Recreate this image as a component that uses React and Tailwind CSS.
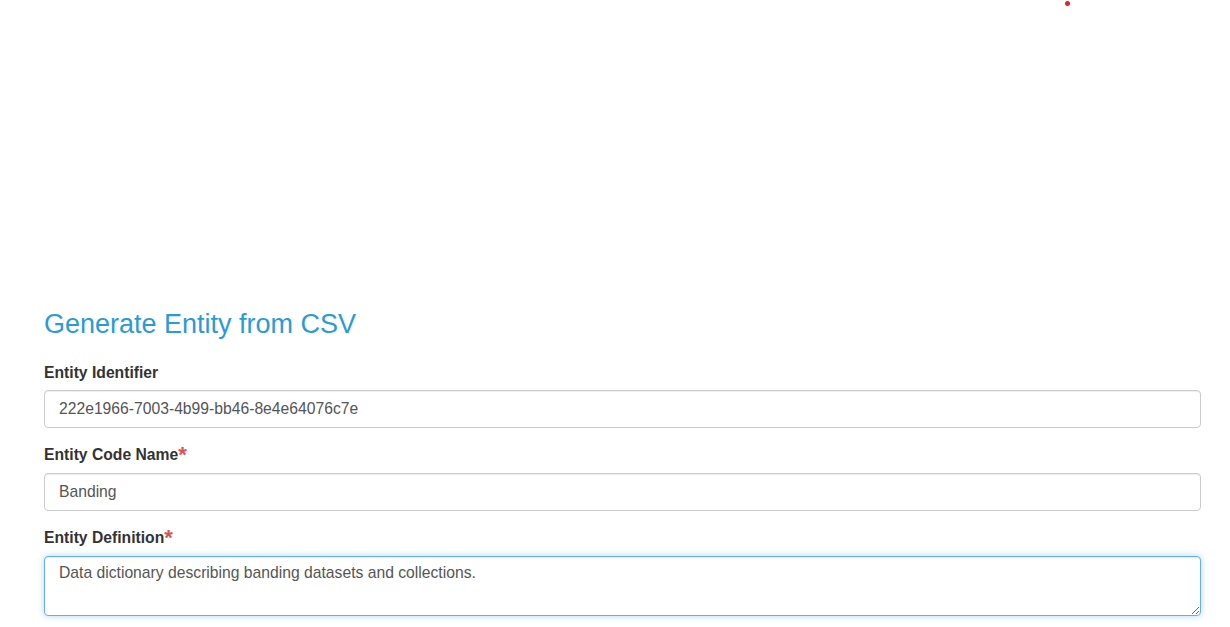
import React from 'react';

function Field({ label, required, children }) {
  return (
    <div className="mb-[16px]">
      <label className="block mb-[7px] text-[15.7px] leading-[20px] font-bold text-[#333]">
        {label}
        {required && <span className="text-[#d9534f] text-[22px] font-bold leading-none align-[-2px]">*</span>}
      </label>
      {children}
    </div>
  );
}

export default function App() {
  return (
    <div className="relative min-h-[627px] bg-white font-['Liberation_Sans',Arial,sans-serif]">
      {/* stray marker at top */}
      <div className="absolute left-[1065px] top-[1px] w-[5px] h-[5px] rounded-full bg-[#e0252b]" />

      <div className="pt-[306px] pl-[44px] pr-[29px]">
        <h3 className="text-[27px] leading-[36px] text-[#2b9bd5] mb-[21px]">Generate Entity from CSV</h3>

        <Field label="Entity Identifier">
          <input
            readOnly
            value="222e1966-7003-4b99-bb46-8e4e64076c7e"
            className="block w-full h-[38px] px-[14px] border border-[#ccc] rounded-[4px] text-[15.7px] text-[#555] shadow-[inset_0_1px_1px_rgba(0,0,0,0.075)] outline-none"
          />
        </Field>

        <Field label="Entity Code Name" required>
          <input
            readOnly
            value="Banding"
            className="block w-full h-[38px] px-[14px] border border-[#ccc] rounded-[4px] text-[15.7px] text-[#555] shadow-[inset_0_1px_1px_rgba(0,0,0,0.075)] outline-none"
          />
        </Field>

        <Field label="Entity Definition" required>
          <textarea
            readOnly
            value="Data dictionary describing banding datasets and collections."
            className="block w-full h-[60px] px-[14px] pt-[6px] border border-[#66afe9] rounded-[4px] text-[15.7px] leading-[20px] text-[#555] shadow-[inset_0_1px_1px_rgba(0,0,0,0.075),0_0_6px_rgba(102,175,233,0.5)] outline-none resize-y"
          />
        </Field>
      </div>
    </div>
  );
}
